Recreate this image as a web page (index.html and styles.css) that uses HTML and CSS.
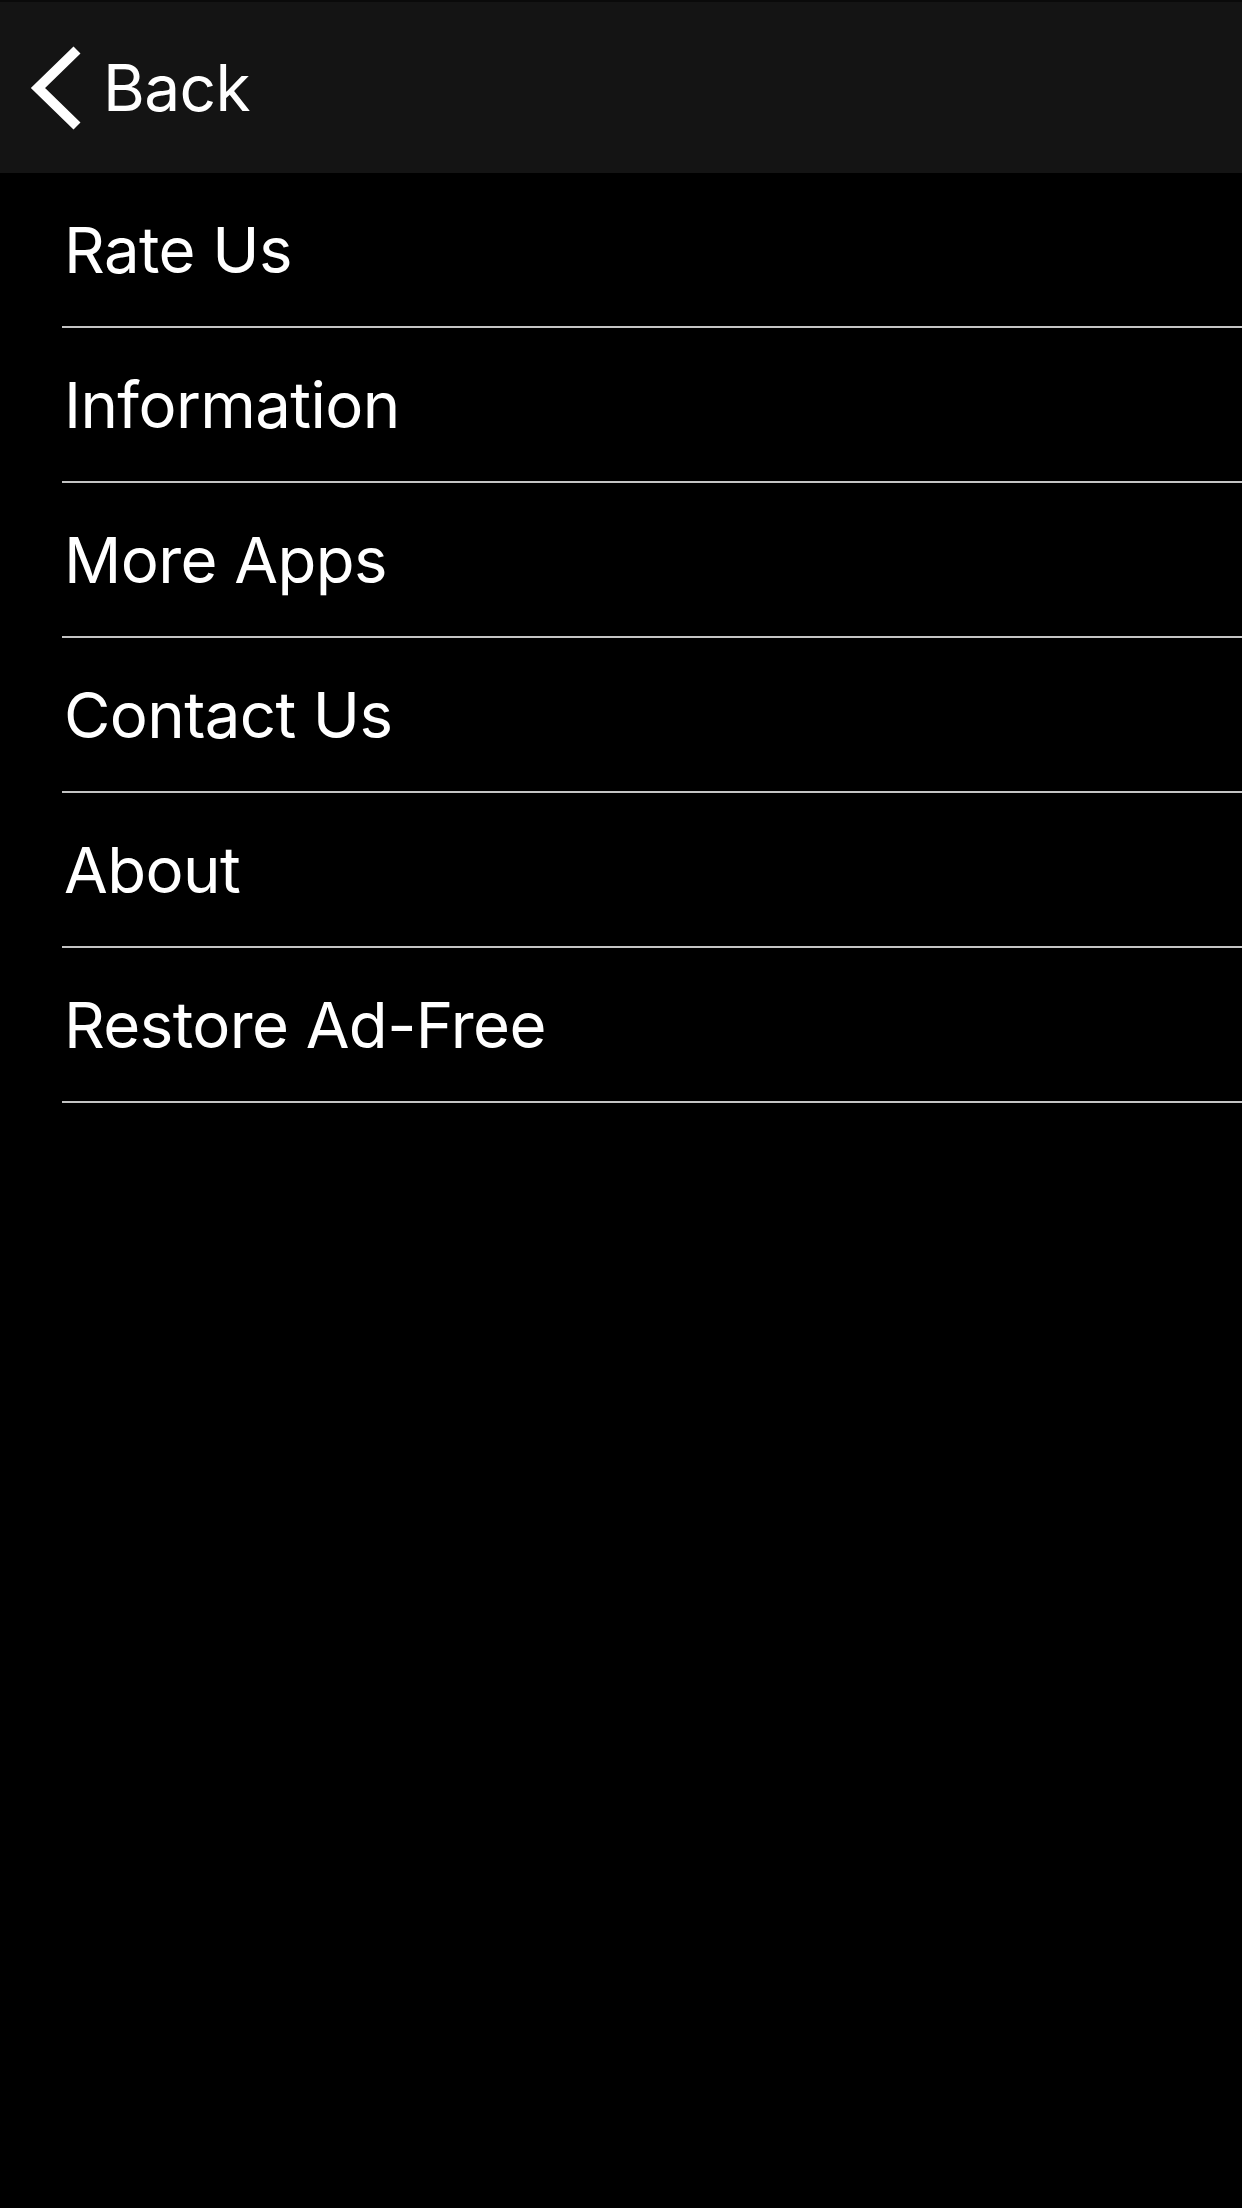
FILE: index.html
```html
<!DOCTYPE html>
<html lang="en">
<head>
<meta charset="utf-8">
<title>Settings</title>
<link rel="stylesheet" href="styles.css">
</head>
<body>
<header class="nav">
  <a class="back" href="#">
    <svg class="chev" width="56" height="84" viewBox="0 0 56 84" aria-hidden="true">
      <polyline points="49,4 10,42 49,80" fill="none" stroke="#ffffff" stroke-width="10" stroke-linejoin="miter"/>
    </svg>
    <span class="back-label">Back</span>
  </a>
</header>
<ul class="menu">
  <li class="item">Rate Us</li>
  <li class="item">Information</li>
  <li class="item">More Apps</li>
  <li class="item">Contact Us</li>
  <li class="item">About</li>
  <li class="item">Restore Ad-Free</li>
</ul>
</body>
</html>
```

FILE: styles.css
```css
html, body {
  margin: 0;
  padding: 0;
  background: #000000;
  color: #ffffff;
  font-family: Inter, "Noto Sans", "Liberation Sans", sans-serif;
}

.nav {
  height: 171px;
  border-top: 2px solid #0a0a0a;
  background: #141414;
  display: flex;
  align-items: center;
}

.back {
  display: flex;
  align-items: center;
  gap: 19px;
  margin-left: 28px;
  color: #ffffff;
  text-decoration: none;
}

.chev {
  display: block;
}

.back-label {
  font-size: 64px;
  line-height: 1;
  letter-spacing: -0.6px;
}

.menu {
  list-style: none;
  margin: 0 0 0 62px;
  padding: 0;
}

.item {
  height: 153px;
  border-bottom: 2px solid #c4c4c4;
  display: flex;
  align-items: center;
  padding-left: 2px;
  font-size: 63.5px;
  letter-spacing: -0.6px;
}
```
